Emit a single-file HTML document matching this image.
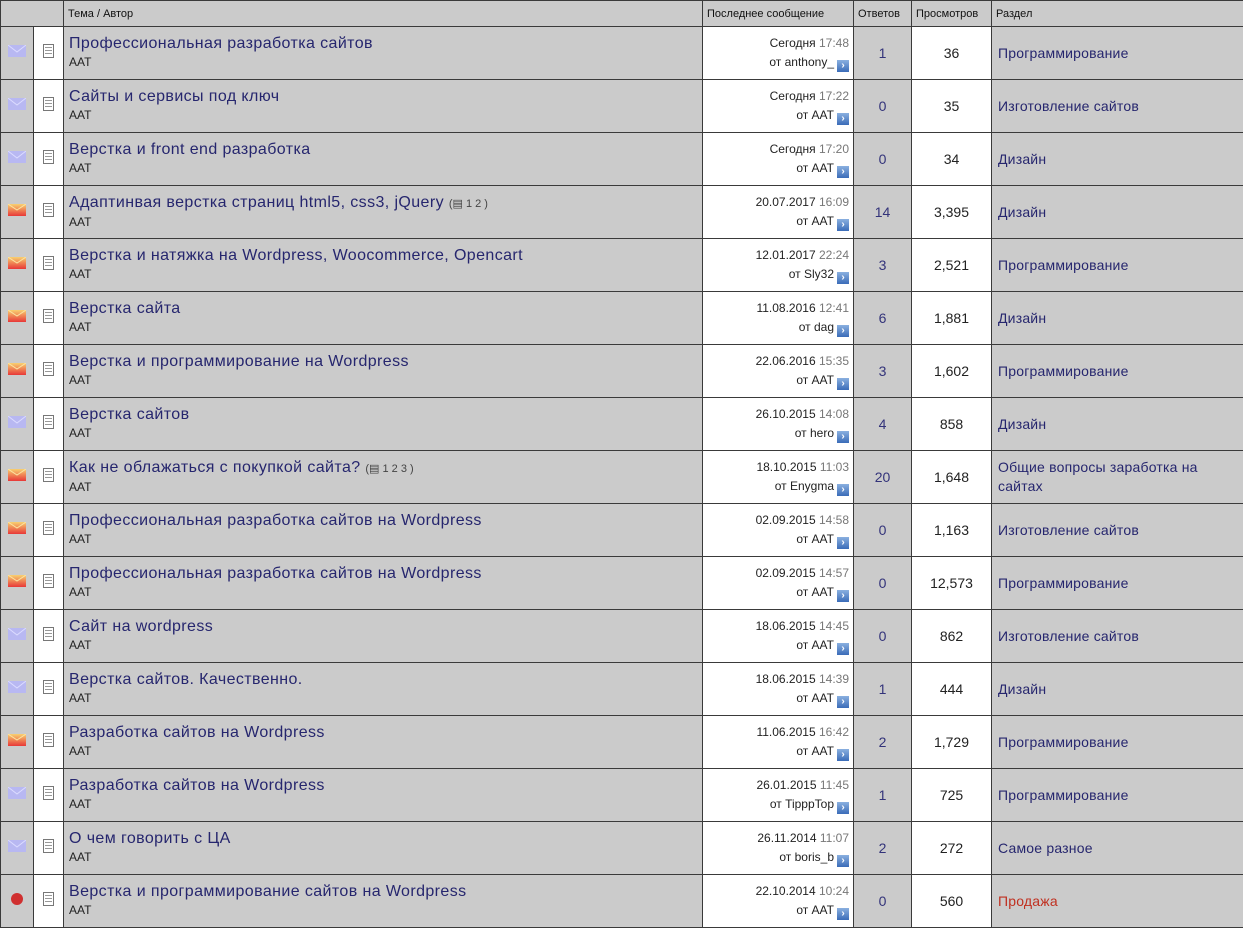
<!DOCTYPE html>
<html><head><meta charset="utf-8"><style>
html,body{margin:0;padding:0;background:#fff;width:1243px;height:898px;overflow:hidden;font-family:"Liberation Sans","DejaVu Sans",sans-serif;}
table{border-collapse:collapse;table-layout:fixed;width:1244px;position:absolute;left:0;top:0}
td{border:1px solid #3a3a3a;background:#cbcbcb;padding:0;overflow:hidden;white-space:nowrap;vertical-align:middle}
tr.h td{height:25px;font-size:11px;color:#111;padding-left:4px}
tr.r td{height:52px}
td.w{background:#fff}
td.ic{text-align:center}
.t{font-size:16px;color:#26266e;padding-left:5px;letter-spacing:0.4px;line-height:20px;margin-top:-2px}
.a{font-size:12px;color:#222;padding-left:5px;line-height:16px}
.pg{font-size:11px;color:#444;letter-spacing:0}
.lp{text-align:right;font-size:12px;color:#222;padding-right:4px;line-height:19px}
.lp span{color:#777}
.ar{display:inline-block;width:12px;height:12px;background:linear-gradient(#8ab0e0,#3a6cb8);vertical-align:-2px;margin-left:3px;color:#fff;font-size:10px;line-height:12px;text-align:center;font-weight:bold;font-style:normal}
.n{text-align:center;font-size:14px;color:#33337a}
.v{text-align:center;font-size:14px;color:#222}
.s{font-size:14px;color:#26266e;padding-left:6px;padding-right:35px;white-space:normal;line-height:19px;letter-spacing:0.2px}
.doc{display:inline-block;width:11px;height:14px;border:1px solid #777;background:repeating-linear-gradient(#fff 0 2px,#999 2px 3px);background-clip:content-box;padding:2px 1px;box-sizing:border-box;}
</style></head><body>
<svg width="0" height="0" style="position:absolute"><defs><linearGradient id="o" x1="0" y1="0" x2="0" y2="1"><stop offset="0" stop-color="#f8d070"/><stop offset="1" stop-color="#e83838"/></linearGradient></defs></svg>
<table>
<colgroup><col style="width:33px"><col style="width:30px"><col style="width:639px"><col style="width:151px"><col style="width:58px"><col style="width:80px"><col style="width:253px"></colgroup>
<tr class="h"><td colspan="2"></td><td>Тема / Автор</td><td>Последнее сообщение</td><td>Ответов</td><td>Просмотров</td><td>Раздел</td></tr>
<tr class="r"><td class="ic"><svg width="18" height="12"><path d="M0 0h18v12H0z" fill="#b8b8f2"/><path d="M0 0l9 7 9-7" stroke="#dcdcff" fill="none"/></svg></td><td class="w ic"><span class="doc"></span></td><td><div class="t">Профессиональная разработка сайтов</div><div class="a">AAT</div></td><td class="w lp">Сегодня <span>17:48</span><br>от anthony_<i class="ar">›</i></td><td class="n">1</td><td class="w v">36</td><td class="s">Программирование</td></tr>
<tr class="r"><td class="ic"><svg width="18" height="12"><path d="M0 0h18v12H0z" fill="#b8b8f2"/><path d="M0 0l9 7 9-7" stroke="#dcdcff" fill="none"/></svg></td><td class="w ic"><span class="doc"></span></td><td><div class="t">Сайты и сервисы под ключ</div><div class="a">AAT</div></td><td class="w lp">Сегодня <span>17:22</span><br>от AAT<i class="ar">›</i></td><td class="n">0</td><td class="w v">35</td><td class="s">Изготовление сайтов</td></tr>
<tr class="r"><td class="ic"><svg width="18" height="12"><path d="M0 0h18v12H0z" fill="#b8b8f2"/><path d="M0 0l9 7 9-7" stroke="#dcdcff" fill="none"/></svg></td><td class="w ic"><span class="doc"></span></td><td><div class="t">Верстка и front end разработка</div><div class="a">AAT</div></td><td class="w lp">Сегодня <span>17:20</span><br>от AAT<i class="ar">›</i></td><td class="n">0</td><td class="w v">34</td><td class="s">Дизайн</td></tr>
<tr class="r"><td class="ic"><svg width="18" height="12"><path d="M0 0h18v12H0z" fill="url(#o)"/><path d="M0 0l9 6 9-6" stroke="#fbe3a0" fill="none"/></svg></td><td class="w ic"><span class="doc"></span></td><td><div class="t">Адаптинвая верстка страниц html5, css3, jQuery <span class="pg">(▤ 1 2 )</span></div><div class="a">AAT</div></td><td class="w lp">20.07.2017 <span>16:09</span><br>от AAT<i class="ar">›</i></td><td class="n">14</td><td class="w v">3,395</td><td class="s">Дизайн</td></tr>
<tr class="r"><td class="ic"><svg width="18" height="12"><path d="M0 0h18v12H0z" fill="url(#o)"/><path d="M0 0l9 6 9-6" stroke="#fbe3a0" fill="none"/></svg></td><td class="w ic"><span class="doc"></span></td><td><div class="t">Верстка и натяжка на Wordpress, Woocommerce, Opencart</div><div class="a">AAT</div></td><td class="w lp">12.01.2017 <span>22:24</span><br>от Sly32<i class="ar">›</i></td><td class="n">3</td><td class="w v">2,521</td><td class="s">Программирование</td></tr>
<tr class="r"><td class="ic"><svg width="18" height="12"><path d="M0 0h18v12H0z" fill="url(#o)"/><path d="M0 0l9 6 9-6" stroke="#fbe3a0" fill="none"/></svg></td><td class="w ic"><span class="doc"></span></td><td><div class="t">Верстка сайта</div><div class="a">AAT</div></td><td class="w lp">11.08.2016 <span>12:41</span><br>от dag<i class="ar">›</i></td><td class="n">6</td><td class="w v">1,881</td><td class="s">Дизайн</td></tr>
<tr class="r"><td class="ic"><svg width="18" height="12"><path d="M0 0h18v12H0z" fill="url(#o)"/><path d="M0 0l9 6 9-6" stroke="#fbe3a0" fill="none"/></svg></td><td class="w ic"><span class="doc"></span></td><td><div class="t">Верстка и программирование на Wordpress</div><div class="a">AAT</div></td><td class="w lp">22.06.2016 <span>15:35</span><br>от AAT<i class="ar">›</i></td><td class="n">3</td><td class="w v">1,602</td><td class="s">Программирование</td></tr>
<tr class="r"><td class="ic"><svg width="18" height="12"><path d="M0 0h18v12H0z" fill="#b8b8f2"/><path d="M0 0l9 7 9-7" stroke="#dcdcff" fill="none"/></svg></td><td class="w ic"><span class="doc"></span></td><td><div class="t">Верстка сайтов</div><div class="a">AAT</div></td><td class="w lp">26.10.2015 <span>14:08</span><br>от hero<i class="ar">›</i></td><td class="n">4</td><td class="w v">858</td><td class="s">Дизайн</td></tr>
<tr class="r"><td class="ic"><svg width="18" height="12"><path d="M0 0h18v12H0z" fill="url(#o)"/><path d="M0 0l9 6 9-6" stroke="#fbe3a0" fill="none"/></svg></td><td class="w ic"><span class="doc"></span></td><td><div class="t">Как не облажаться с покупкой сайта? <span class="pg">(▤ 1 2 3 )</span></div><div class="a">AAT</div></td><td class="w lp">18.10.2015 <span>11:03</span><br>от Enygma<i class="ar">›</i></td><td class="n">20</td><td class="w v">1,648</td><td class="s">Общие вопросы заработка на сайтах</td></tr>
<tr class="r"><td class="ic"><svg width="18" height="12"><path d="M0 0h18v12H0z" fill="url(#o)"/><path d="M0 0l9 6 9-6" stroke="#fbe3a0" fill="none"/></svg></td><td class="w ic"><span class="doc"></span></td><td><div class="t">Профессиональная разработка сайтов на Wordpress</div><div class="a">AAT</div></td><td class="w lp">02.09.2015 <span>14:58</span><br>от AAT<i class="ar">›</i></td><td class="n">0</td><td class="w v">1,163</td><td class="s">Изготовление сайтов</td></tr>
<tr class="r"><td class="ic"><svg width="18" height="12"><path d="M0 0h18v12H0z" fill="url(#o)"/><path d="M0 0l9 6 9-6" stroke="#fbe3a0" fill="none"/></svg></td><td class="w ic"><span class="doc"></span></td><td><div class="t">Профессиональная разработка сайтов на Wordpress</div><div class="a">AAT</div></td><td class="w lp">02.09.2015 <span>14:57</span><br>от AAT<i class="ar">›</i></td><td class="n">0</td><td class="w v">12,573</td><td class="s">Программирование</td></tr>
<tr class="r"><td class="ic"><svg width="18" height="12"><path d="M0 0h18v12H0z" fill="#b8b8f2"/><path d="M0 0l9 7 9-7" stroke="#dcdcff" fill="none"/></svg></td><td class="w ic"><span class="doc"></span></td><td><div class="t">Сайт на wordpress</div><div class="a">AAT</div></td><td class="w lp">18.06.2015 <span>14:45</span><br>от AAT<i class="ar">›</i></td><td class="n">0</td><td class="w v">862</td><td class="s">Изготовление сайтов</td></tr>
<tr class="r"><td class="ic"><svg width="18" height="12"><path d="M0 0h18v12H0z" fill="#b8b8f2"/><path d="M0 0l9 7 9-7" stroke="#dcdcff" fill="none"/></svg></td><td class="w ic"><span class="doc"></span></td><td><div class="t">Верстка сайтов. Качественно.</div><div class="a">AAT</div></td><td class="w lp">18.06.2015 <span>14:39</span><br>от AAT<i class="ar">›</i></td><td class="n">1</td><td class="w v">444</td><td class="s">Дизайн</td></tr>
<tr class="r"><td class="ic"><svg width="18" height="12"><path d="M0 0h18v12H0z" fill="url(#o)"/><path d="M0 0l9 6 9-6" stroke="#fbe3a0" fill="none"/></svg></td><td class="w ic"><span class="doc"></span></td><td><div class="t">Разработка сайтов на Wordpress</div><div class="a">AAT</div></td><td class="w lp">11.06.2015 <span>16:42</span><br>от AAT<i class="ar">›</i></td><td class="n">2</td><td class="w v">1,729</td><td class="s">Программирование</td></tr>
<tr class="r"><td class="ic"><svg width="18" height="12"><path d="M0 0h18v12H0z" fill="#b8b8f2"/><path d="M0 0l9 7 9-7" stroke="#dcdcff" fill="none"/></svg></td><td class="w ic"><span class="doc"></span></td><td><div class="t">Разработка сайтов на Wordpress</div><div class="a">AAT</div></td><td class="w lp">26.01.2015 <span>11:45</span><br>от TipppTop<i class="ar">›</i></td><td class="n">1</td><td class="w v">725</td><td class="s">Программирование</td></tr>
<tr class="r"><td class="ic"><svg width="18" height="12"><path d="M0 0h18v12H0z" fill="#b8b8f2"/><path d="M0 0l9 7 9-7" stroke="#dcdcff" fill="none"/></svg></td><td class="w ic"><span class="doc"></span></td><td><div class="t">О чем говорить с ЦА</div><div class="a">AAT</div></td><td class="w lp">26.11.2014 <span>11:07</span><br>от boris_b<i class="ar">›</i></td><td class="n">2</td><td class="w v">272</td><td class="s">Самое разное</td></tr>
<tr class="r"><td class="ic"><svg width="18" height="12"><circle cx="9" cy="6" r="6" fill="#d03030"/></svg></td><td class="w ic"><span class="doc"></span></td><td><div class="t">Верстка и программирование сайтов на Wordpress</div><div class="a">AAT</div></td><td class="w lp">22.10.2014 <span>10:24</span><br>от AAT<i class="ar">›</i></td><td class="n">0</td><td class="w v">560</td><td class="s" style="color:#c03020">Продажа</td></tr>
</table>
</body></html>
